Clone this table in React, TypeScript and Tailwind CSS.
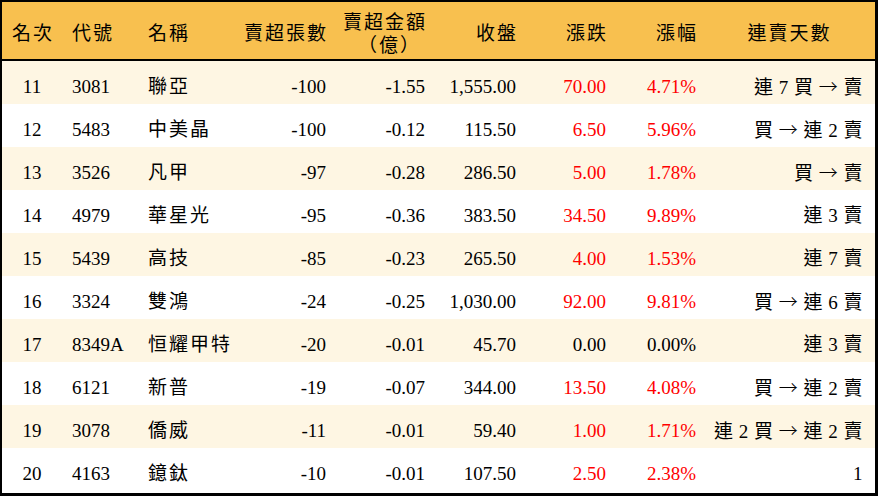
import React from "react";

type Row = {
  rank: string;
  code: string;
  name: string;
  qty: string;
  amt: string;
  close: string;
  chg: string;
  pct: string;
  days: string;
  red: boolean;
};

const rows: Row[] = [
  { rank: "11", code: "3081", name: "聯亞", qty: "-100", amt: "-1.55", close: "1,555.00", chg: "70.00", pct: "4.71%", days: "連 7 買 → 賣", red: true },
  { rank: "12", code: "5483", name: "中美晶", qty: "-100", amt: "-0.12", close: "115.50", chg: "6.50", pct: "5.96%", days: "買 → 連 2 賣", red: true },
  { rank: "13", code: "3526", name: "凡甲", qty: "-97", amt: "-0.28", close: "286.50", chg: "5.00", pct: "1.78%", days: "買 → 賣", red: true },
  { rank: "14", code: "4979", name: "華星光", qty: "-95", amt: "-0.36", close: "383.50", chg: "34.50", pct: "9.89%", days: "連 3 賣", red: true },
  { rank: "15", code: "5439", name: "高技", qty: "-85", amt: "-0.23", close: "265.50", chg: "4.00", pct: "1.53%", days: "連 7 賣", red: true },
  { rank: "16", code: "3324", name: "雙鴻", qty: "-24", amt: "-0.25", close: "1,030.00", chg: "92.00", pct: "9.81%", days: "買 → 連 6 賣", red: true },
  { rank: "17", code: "8349A", name: "恒耀甲特", qty: "-20", amt: "-0.01", close: "45.70", chg: "0.00", pct: "0.00%", days: "連 3 賣", red: false },
  { rank: "18", code: "6121", name: "新普", qty: "-19", amt: "-0.07", close: "344.00", chg: "13.50", pct: "4.08%", days: "買 → 連 2 賣", red: true },
  { rank: "19", code: "3078", name: "僑威", qty: "-11", amt: "-0.01", close: "59.40", chg: "1.00", pct: "1.71%", days: "連 2 買 → 連 2 賣", red: true },
  { rank: "20", code: "4163", name: "鐿鈦", qty: "-10", amt: "-0.01", close: "107.50", chg: "2.50", pct: "2.38%", days: "1", red: true },
];

const grid = "grid grid-cols-[60px_76px_98px_100px_99px_91px_90px_90px_169px]";

function Days({ text }: { text: string }) {
  const parts = text.split("→");
  return (
    <>
      {parts.map((p, i) => (
        <React.Fragment key={i}>
          {i > 0 && (
            <span style={{ fontFamily: '"Noto Sans CJK TC", sans-serif' }} className="font-light">
              →
            </span>
          )}
          {p}
        </React.Fragment>
      ))}
    </>
  );
}

export default function App() {
  return (
    <div
      className="w-[878px] h-[496px] bg-white border-l-2 border-t-2 border-r-[3px] border-b-[3px] border-black text-black text-[19px] leading-none"
      style={{ fontFamily: '"Liberation Serif", "Noto Sans CJK TC", serif' }}
    >
      <div className={`${grid} h-[59px] pt-[6px] bg-[#F8C04F] border-b-2 border-black items-center tracking-[2px]`}>
        <div className="text-center pl-[2px]">名次</div>
        <div className="pl-[10px]">代號</div>
        <div className="pl-[10px]">名稱</div>
        <div className="text-right pr-[8px]">賣超張數</div>
        <div className="text-right pr-[8px] flex flex-col items-end gap-[4px]">
          <span>賣超金額</span>
          <span className="pr-[6px]">（億）</span>
        </div>
        <div className="text-right pr-[8px]">收盤</div>
        <div className="text-right pr-[8px]">漲跌</div>
        <div className="text-right pr-[8px]">漲幅</div>
        <div className="text-center pr-[2px]">連賣天數</div>
      </div>
      {rows.map((r, i) => (
        <div
          key={r.rank}
          className={`${grid} h-[43px] pt-[7px] items-center ${i % 2 === 0 ? "bg-[#FEF6E3]" : "bg-white"}`}
        >
          <div className="text-center">{r.rank}</div>
          <div className="pl-[10px]">{r.code}</div>
          <div className="pl-[10px] tracking-[2px]">{r.name}</div>
          <div className="text-right pr-[10px]">{r.qty}</div>
          <div className="text-right pr-[10px]">{r.amt}</div>
          <div className="text-right pr-[10px]">{r.close}</div>
          <div className={`text-right pr-[10px] ${r.red ? "text-[#FF0000]" : ""}`}>{r.chg}</div>
          <div className={`text-right pr-[10px] ${r.red ? "text-[#FF0000]" : ""}`}>{r.pct}</div>
          <div className="text-right pr-[12px] whitespace-nowrap tracking-[0.5px]">
            <Days text={r.days} />
          </div>
        </div>
      ))}
    </div>
  );
}
